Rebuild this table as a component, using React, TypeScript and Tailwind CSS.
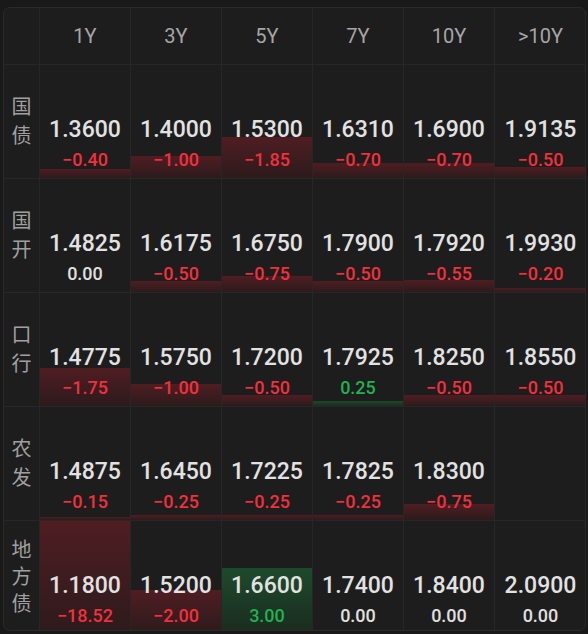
import React from 'react'

type Cell = { value: string; change: number } | null

const tenors = ['1Y', '3Y', '5Y', '7Y', '10Y', '>10Y']

const rows: { label: string[]; cells: Cell[] }[] = [
  {
    label: ['国', '债'],
    cells: [
      { value: '1.3600', change: -0.4 },
      { value: '1.4000', change: -1.0 },
      { value: '1.5300', change: -1.85 },
      { value: '1.6310', change: -0.7 },
      { value: '1.6900', change: -0.7 },
      { value: '1.9135', change: -0.5 },
    ],
  },
  {
    label: ['国', '开'],
    cells: [
      { value: '1.4825', change: 0 },
      { value: '1.6175', change: -0.5 },
      { value: '1.6750', change: -0.75 },
      { value: '1.7900', change: -0.5 },
      { value: '1.7920', change: -0.55 },
      { value: '1.9930', change: -0.2 },
    ],
  },
  {
    label: ['口', '行'],
    cells: [
      { value: '1.4775', change: -1.75 },
      { value: '1.5750', change: -1.0 },
      { value: '1.7200', change: -0.5 },
      { value: '1.7925', change: 0.25 },
      { value: '1.8250', change: -0.5 },
      { value: '1.8550', change: -0.5 },
    ],
  },
  {
    label: ['农', '发'],
    cells: [
      { value: '1.4875', change: -0.15 },
      { value: '1.6450', change: -0.25 },
      { value: '1.7225', change: -0.25 },
      { value: '1.7825', change: -0.25 },
      { value: '1.8300', change: -0.75 },
      null,
    ],
  },
  {
    label: ['地', '方', '债'],
    cells: [
      { value: '1.1800', change: -18.52 },
      { value: '1.5200', change: -2.0 },
      { value: '1.6600', change: 3.0 },
      { value: '1.7400', change: 0 },
      { value: '1.8400', change: 0 },
      { value: '2.0900', change: 0 },
    ],
  },
]

const ROW_H = 113

const fmt = (n: number) => (n < 0 ? '\u2212' + Math.abs(n).toFixed(2) : n.toFixed(2))

const YieldCell = ({ cell, last }: { cell: Cell; last: boolean }) => {
  if (!cell) return <div className={`h-[113px] ${last ? '' : 'border-r border-[#272727]'}`} />
  const h = Math.min(ROW_H, Math.abs(cell.change) * 22)
  const up = cell.change > 0
  const down = cell.change < 0
  return (
    <div className={`relative h-[113px] flex flex-col items-center justify-end pb-[5px] ${last ? '' : 'border-r border-[#272727]'}`}>
      {h > 0 && (
        <div
          className={`absolute left-0 right-0 bottom-0 ${
            up ? 'bg-gradient-to-b from-[#1d4a2b] to-[#1a2b1f]' : 'bg-gradient-to-b from-[#4f1d22] to-[#2c1a1c]'
          }`}
          style={{ height: h }}
        />
      )}
      <div className="relative text-[23px] leading-[26px] font-medium text-[#e2e2e2]">{cell.value}</div>
      <div
        className={`relative mt-[4px] text-[18px] leading-[26px] font-medium ${
          down ? 'text-[#f2303c]' : up ? 'text-[#1fb34f]' : 'text-[#e0e0e0]'
        }`}
      >
        {fmt(cell.change)}
      </div>
    </div>
  )
}

export default function App() {
  return (
    <div className="w-[588px] h-[634px] bg-[#191919] pt-[7px] pl-[3px]" style={{ fontFamily: 'Roboto, "Noto Sans CJK SC", sans-serif' }}>
      <div className="w-[583px] h-[624px] rounded-[7px] border border-[#2a2a2a] bg-[#1d1d1d] overflow-hidden">
        <div className="grid grid-cols-[36px_repeat(6,91px)] h-[57px] border-b border-[#272727]">
          <div className="border-r border-[#272727]" />
          {tenors.map((t, i) => (
            <div
              key={t}
              className={`flex items-center justify-center text-[20px] text-[#a6a6a6] ${i < 5 ? 'border-r border-[#272727]' : ''}`}
            >
              {t}
            </div>
          ))}
        </div>
        {rows.map((row, ri) => (
          <div
            key={ri}
            className={`grid grid-cols-[36px_repeat(6,91px)] ${ri < rows.length - 1 ? 'border-b border-[#272727]' : ''}`}
          >
            <div className="flex flex-col items-center justify-center border-r border-[#272727] text-[20px] text-[#a0a0a0]">
              {row.label.map((c, ci) => (
                <span key={ci} className={row.label.length > 2 ? 'leading-[27px]' : 'leading-[29px]'}>
                  {c}
                </span>
              ))}
            </div>
            {row.cells.map((cell, ci) => (
              <YieldCell key={ci} cell={cell} last={ci === 5} />
            ))}
          </div>
        ))}
      </div>
    </div>
  )
}
